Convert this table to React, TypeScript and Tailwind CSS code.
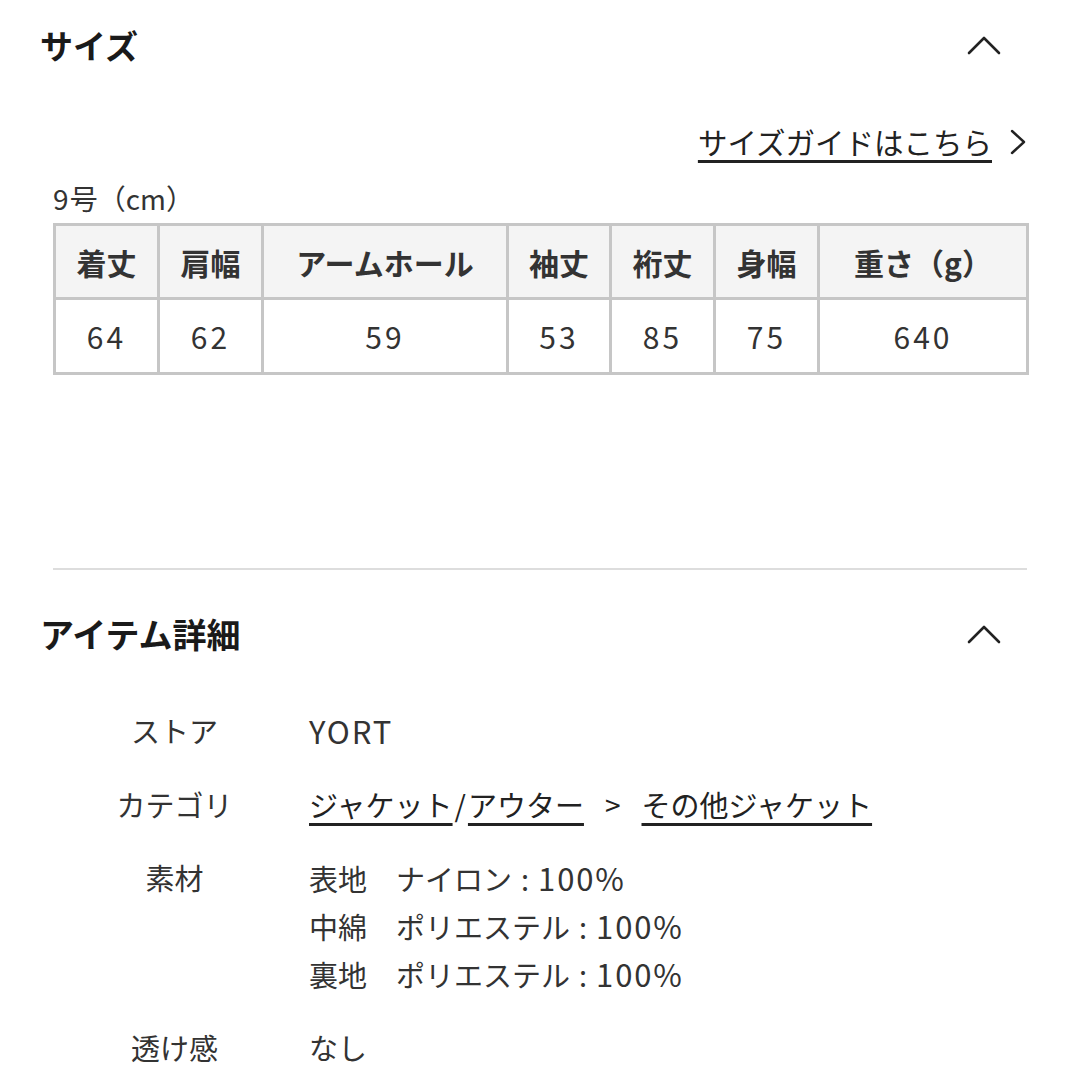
import React from "react";

const font = { fontFamily: '"Noto Sans CJK JP", "Noto Sans", sans-serif' };

function ChevronUp() {
  return (
    <svg width="34" height="20" viewBox="0 0 34 20" fill="none">
      <polyline points="2,18 17,3 32,18" stroke="#222" strokeWidth="2.6" strokeLinecap="round" strokeLinejoin="round" />
    </svg>
  );
}

function ChevronRight() {
  return (
    <svg width="16" height="26" viewBox="0 0 16 26" fill="none">
      <polyline points="2,2 14,13 2,24" stroke="#222" strokeWidth="2.4" strokeLinecap="round" strokeLinejoin="round" />
    </svg>
  );
}

const headers = ["着丈", "肩幅", "アームホール", "袖丈", "裄丈", "身幅", "重さ（g）"];
const values = ["64", "62", "59", "53", "85", "75", "640"];
const widths = ["w-[104px]", "w-[104px]", "w-[245px]", "w-[103px]", "w-[104px]", "w-[104px]", "w-[209px]"];

function Latin({ children }: { children: React.ReactNode }) {
  return <span className="text-[31px] tracking-[0.06em]">{children}</span>;
}

export default function App() {
  return (
    <div className="w-[1080px] h-[1080px] bg-white overflow-hidden text-[#333]" style={font}>
      {/* Size section */}
      <div className="h-[90px] flex items-center justify-between pl-[40px] pr-[79px]">
        <div className="text-[33px] font-bold text-[#1a1a1a] leading-none">サイズ</div>
        <ChevronUp />
      </div>
      <div className="mt-[26px] h-[52px] flex items-center justify-end pr-[54px] gap-[18px]">
        <span className="text-[29.5px] leading-none underline underline-offset-[6px] decoration-[2.5px] text-[#222]">サイズガイドはこちら</span>
        <ChevronRight />
      </div>
      <div className="mt-[12px] ml-[53px] h-[36px] flex items-center text-[28px] leading-none text-[#333]">
        <span className="tracking-[0.04em]">9</span>号（cm）
      </div>
      <table className="mt-[7px] ml-[53px] w-[973px] border-collapse table-fixed">
        <colgroup>
          {widths.map((w, i) => (
            <col key={i} className={w} />
          ))}
        </colgroup>
        <tbody>
          <tr className="h-[74px] bg-[#f4f4f4]">
            {headers.map((h, i) => (
              <td key={i} className="border-[3px] border-[#c6c6c6] text-center font-bold text-[30px] text-[#333] leading-none">
                {h}
              </td>
            ))}
          </tr>
          <tr className="h-[75px]">
            {values.map((v, i) => (
              <td key={i} className="border-[3px] border-[#c6c6c6] text-center text-[30px] tracking-[0.1em] text-[#333] leading-none">
                {v}
              </td>
            ))}
          </tr>
        </tbody>
      </table>

      <div className="mt-[193px] mx-[53px] h-[2px] bg-[#dddddd]" />

      {/* Item details */}
      <div className="mt-[19px] h-[90px] flex items-center justify-between pl-[40px] pr-[79px]">
        <div className="text-[34px] font-bold text-[#1a1a1a] leading-none">アイテム詳細</div>
        <ChevronUp />
      </div>

      <div className="mt-[28px] flex flex-col gap-[26px] text-[29px] leading-[47px] text-[#333]">
        <div className="flex">
          <div className="w-[269px] ml-[40px] text-center">ストア</div>
          <div>
            <Latin>YORT</Latin>
          </div>
        </div>
        <div className="flex">
          <div className="w-[269px] ml-[40px] text-center">カテゴリ</div>
          <div className="flex items-center text-[#222]">
            <span className="underline underline-offset-[6px] decoration-[2.5px]">ジャケット</span>
            <span className="mx-[2px]">/</span>
            <span className="underline underline-offset-[6px] decoration-[2.5px]">アウター</span>
            <span className="mx-[21px] text-[28px]">&gt;</span>
            <span className="underline underline-offset-[6px] decoration-[2.5px]">その他ジャケット</span>
          </div>
        </div>
        <div className="flex">
          <div className="w-[269px] ml-[40px] text-center">素材</div>
          <div className="flex flex-col">
            <div>
              表地　ナイロン<span className="mx-[9px]">:</span>
              <Latin>100%</Latin>
            </div>
            <div>
              中綿　ポリエステル<span className="mx-[9px]">:</span>
              <Latin>100%</Latin>
            </div>
            <div>
              裏地　ポリエステル<span className="mx-[9px]">:</span>
              <Latin>100%</Latin>
            </div>
          </div>
        </div>
        <div className="flex">
          <div className="w-[269px] ml-[40px] text-center">透け感</div>
          <div>なし</div>
        </div>
      </div>
    </div>
  );
}
